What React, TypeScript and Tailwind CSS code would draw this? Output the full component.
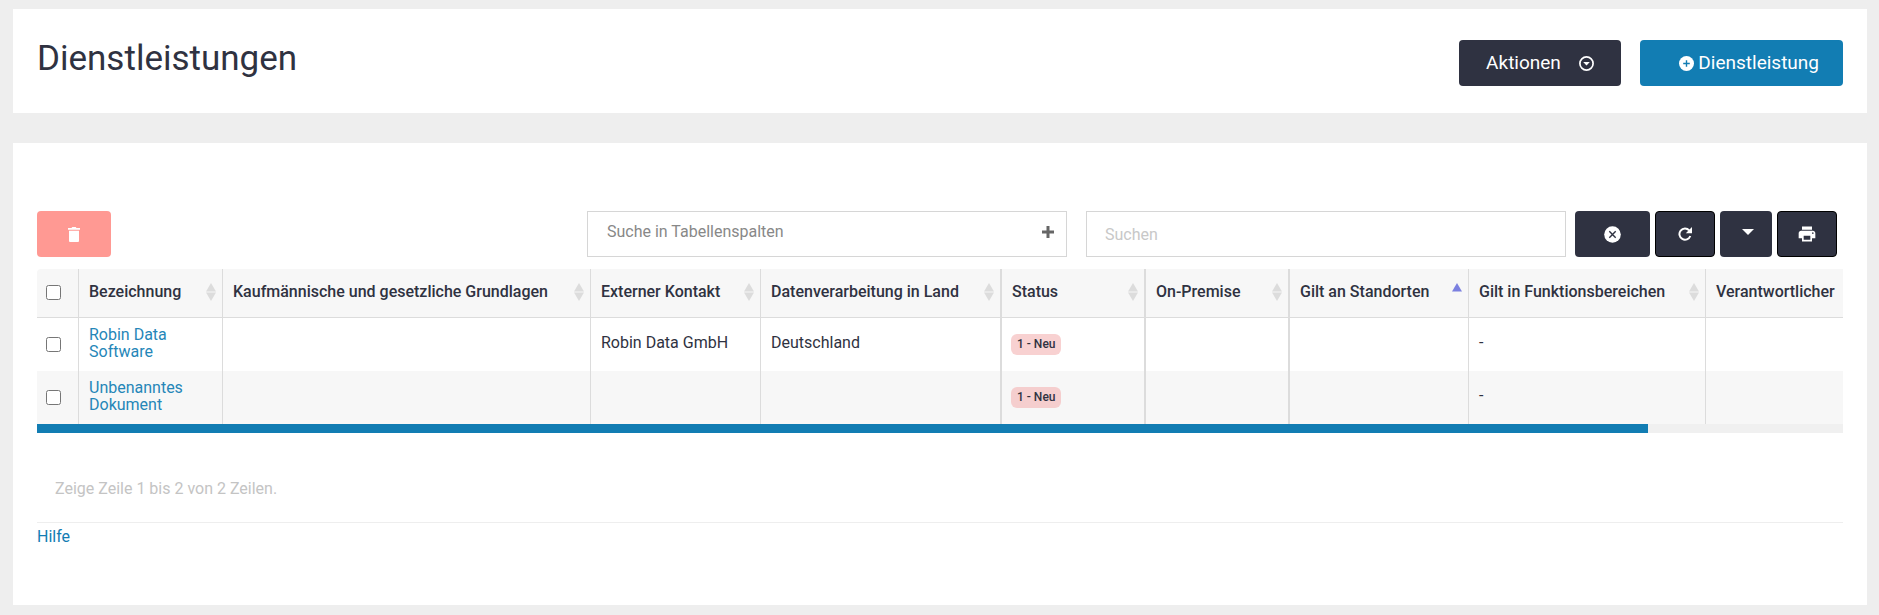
import React, { useState } from "react";
import { MdPrint } from "react-icons/md";

interface Service {
  id: number;
  name: string;
  contact: string;
  country: string;
  status: string;
  areas: string;
}

interface Column {
  label: string;
  width: string;
  sort: "none" | "asc";
}

const columns: Column[] = [
  { label: "Bezeichnung", width: "w-[144px] border-r", sort: "none" },
  { label: "Kaufmännische und gesetzliche Grundlagen", width: "w-[368px] border-r", sort: "none" },
  { label: "Externer Kontakt", width: "w-[170px] border-r", sort: "none" },
  { label: "Datenverarbeitung in Land", width: "w-[241px] border-r-2", sort: "none" },
  { label: "Status", width: "w-[144px] border-r-2", sort: "none" },
  { label: "On-Premise", width: "w-[144px] border-r-2", sort: "none" },
  { label: "Gilt an Standorten", width: "w-[179px] border-r", sort: "asc" },
  { label: "Gilt in Funktionsbereichen", width: "w-[237px] border-r", sort: "none" },
  { label: "Verantwortlicher", width: "w-[356px]", sort: "none" },
];

const services: Service[] = [
  { id: 1, name: "Robin Data Software", contact: "Robin Data GmbH", country: "Deutschland", status: "1 - Neu", areas: "-" },
  { id: 2, name: "Unbenanntes Dokument", contact: "", country: "", status: "1 - Neu", areas: "-" },
];

const SortIcon = ({ sort }: { sort: "none" | "asc" }) => (
  <svg width="10" height="18" viewBox="0 0 10 18" className="shrink-0">
    <path d="M5 0l5 8.500H0z" fill={sort === "asc" ? "#7b80e0" : "#dcdcdc"} />
    {sort === "none" && <path d="M0 9.500h10L5 18z" fill="#dcdcdc" />}
  </svg>
);

const CaretCircle = () => (
  <svg width="15" height="15" viewBox="0 0 15 15">
    <circle cx="7.500" cy="7.500" r="6.600" fill="none" stroke="currentColor" strokeWidth="1.700" />
    <path d="M4.200 6h6.600L7.500 9.400z" fill="currentColor" />
  </svg>
);

const PlusCircle = () => (
  <svg width="15" height="15" viewBox="0 0 15 15">
    <circle cx="7.500" cy="7.500" r="7.500" fill="currentColor" />
    <path d="M7.500 4.200v6.600M4.200 7.500h6.600" stroke="#127db3" strokeWidth="1.400" />
  </svg>
);

const CloseCircle = () => (
  <svg width="17" height="17" viewBox="0 0 17 17">
    <circle cx="8.500" cy="8.500" r="8.300" fill="currentColor" />
    <path d="M5.300 5.300l6.400 6.400M11.700 5.300l-6.400 6.400" stroke="#2f3241" strokeWidth="1.400" />
  </svg>
);

const Trash = () => (
  <svg width="12" height="15" viewBox="0 0 12 15" fill="currentColor">
    <path d="M0 1h3.500l.8-1h3.400l.8 1H12v1.800H0zM1 3.800h10V14a1 1 0 0 1-1 1H2a1 1 0 0 1-1-1z" />
  </svg>
);

const Reload = () => (
  <svg width="14" height="14" viewBox="0 0 14 14">
    <path d="M11.200 3.300A5.600 5.600 0 1 0 12.300 9" fill="none" stroke="currentColor" strokeWidth="2" />
    <path d="M14 0v6.200H7.800z" fill="currentColor" />
  </svg>
);

const toolButton = "flex h-[46px] items-center justify-center rounded bg-[#2f3241] text-white";
const cell = "border-[#dcdcdc] px-[10px] pb-1 align-middle";

const App = () => {
  const [selected, setSelected] = useState<number[]>([]);
  const [search, setSearch] = useState("");

  const toggle = (id: number) => {
    setSelected(selected.includes(id) ? selected.filter((s) => s !== id) : [...selected, id]);
  };

  const toggleAll = () => {
    setSelected(selected.length === services.length ? [] : services.map((s) => s.id));
  };

  return (
    <div className="min-h-screen bg-[#eeeeee] pt-[9px] pr-3 pb-[9px] pl-[13px] font-['Roboto',sans-serif] text-base text-[#2f3241]">
      <header className="flex h-[104px] items-center justify-between bg-white px-6">
        <h1 className="pb-1 text-[35px] leading-10">Dienstleistungen</h1>
        <div className="flex gap-[19px] pt-1 text-[19px]">
          <button className="flex h-[46px] w-[162px] items-center justify-center gap-[18px] rounded bg-[#2f3241] text-white">
            Aktionen
            <CaretCircle />
          </button>
          <button className="flex h-[46px] w-[203px] items-center justify-end gap-1 rounded bg-[#127db3] pr-6 text-white">
            <PlusCircle />
            Dienstleistung
          </button>
        </div>
      </header>

      <main className="mt-[30px] bg-white px-6 pt-[68px] pb-14">
        <div className="flex items-center pr-[6px]">
          <button aria-label="Löschen" className="flex h-[46px] w-[74px] items-center justify-center rounded bg-[#ff9993] text-white">
            <Trash />
          </button>
          <div className="ml-auto flex">
            <button className="flex h-[46px] w-[480px] items-center justify-between border border-[#d6d6d6] pr-3 pb-1 pl-[19px] text-[#888888]">
              Suche in Tabellenspalten
              <svg width="12" height="12" viewBox="0 0 12 12">
                <path d="M6 0v12M0 6h12" stroke="#666666" strokeWidth="3" />
              </svg>
            </button>
            <input
              type="text"
              aria-label="Suchen"
              placeholder="Suchen"
              value={search}
              onChange={(e) => setSearch(e.target.value)}
              className="ml-[19px] h-[46px] w-[480px] border border-[#d6d6d6] px-[18px] placeholder:text-[#c8c8c8]"
            />
          </div>
          <div className="ml-[9px] flex gap-[5px]">
            <button aria-label="Suche leeren" className={`${toolButton} w-[75px]`} onClick={() => setSearch("")}>
              <CloseCircle />
            </button>
            <button aria-label="Aktualisieren" className={`${toolButton} w-[60px] border border-black`}>
              <Reload />
            </button>
            <button aria-label="Spalten" className={`${toolButton} w-[52px]`}>
              <svg width="12" height="6" viewBox="0 0 12 6" className="mb-1 ml-1">
                <path d="M0 0h12L6 6z" fill="currentColor" />
              </svg>
            </button>
            <button aria-label="Drucken" className={`${toolButton} w-[60px] border border-black`}>
              <MdPrint size={20} />
            </button>
          </div>
        </div>

        <div className="mt-3 overflow-hidden rounded-tl">
          <table className="w-[2025px] table-fixed border-separate border-spacing-0 text-left">
            <thead>
              <tr className="h-[49px] bg-[#f7f7f7]">
                <th className="w-[42px] border-r border-b border-[#dcdcdc] pb-[2px] pl-[9px] align-middle">
                  <input
                    type="checkbox"
                    aria-label="Alle auswählen"
                    className="block size-[15px]"
                    checked={selected.length === services.length}
                    onChange={toggleAll}
                  />
                </th>
                {columns.map((col) => (
                  <th key={col.label} className={`${col.width} border-b border-[#dcdcdc] pr-[6px] pb-[2px] pl-[10px] align-middle font-medium whitespace-nowrap`}>
                    <div className="flex items-center justify-between">
                      {col.label}
                      <SortIcon sort={col.sort} />
                    </div>
                  </th>
                ))}
              </tr>
            </thead>
            <tbody className="leading-[17px]">
              {services.map((service) => (
                <tr key={service.id} className="h-[53px] even:bg-[#f7f7f7]">
                  <td className="border-r border-[#dcdcdc] pl-[9px] align-middle">
                    <input
                      type="checkbox"
                      aria-label={service.name}
                      className="block size-[15px]"
                      checked={selected.includes(service.id)}
                      onChange={() => toggle(service.id)}
                    />
                  </td>
                  <td className={`${cell} border-r text-[#2586b8]`}>
                    <a href="#">{service.name}</a>
                  </td>
                  <td className={`${cell} border-r`}></td>
                  <td className={`${cell} border-r whitespace-nowrap`}>{service.contact}</td>
                  <td className={`${cell} border-r-2`}>{service.country}</td>
                  <td className="border-r-2 border-[#dcdcdc] pl-[9px] align-middle">
                    <span className="inline-block rounded-md bg-[#f5b8b8]/65 px-[6px] py-[2px] text-xs leading-[17px] font-medium">
                      {service.status}
                    </span>
                  </td>
                  <td className={`${cell} border-r-2`}></td>
                  <td className={`${cell} border-r`}></td>
                  <td className={`${cell} border-r`}>{service.areas}</td>
                  <td className={cell}></td>
                </tr>
              ))}
            </tbody>
          </table>
          <div className="h-[9px] bg-[#f0f0f0]">
            <div className="h-full w-[89.2%] bg-[#127db3]"></div>
          </div>
        </div>

        <p className="mt-11 px-[18px] text-[#c4c4c4]">Zeige Zeile 1 bis 2 von 2 Zeilen.</p>
        <div className="mt-[21px] border-t border-[#eeeeee] pt-[2px]">
          <a href="#" className="text-[#127db3]">Hilfe</a>
        </div>
      </main>
    </div>
  );
};

export default App;
